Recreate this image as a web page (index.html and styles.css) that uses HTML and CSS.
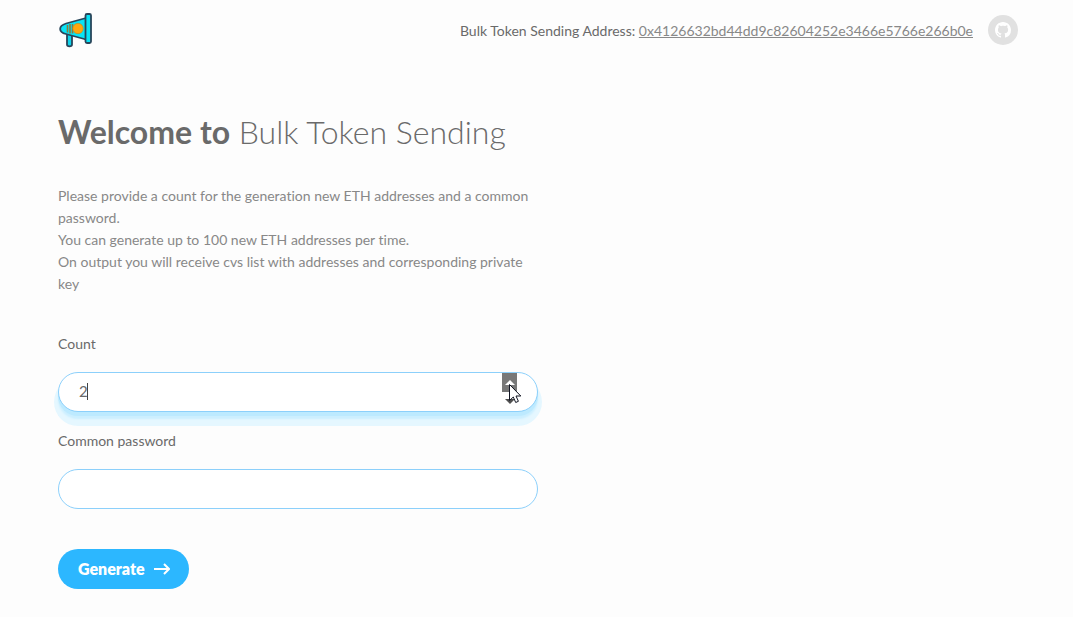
FILE: index.html
```html
<!DOCTYPE html>
<html lang="en">
<head>
<meta charset="utf-8">
<title>Bulk Token Sending</title>
<link rel="stylesheet" href="styles.css">
</head>
<body>
<div class="page">
  <header class="header">
    <a class="logo" href="#" aria-label="Home">
      <svg width="34" height="36" viewBox="0 0 34 36">
        <g stroke="#29455a" stroke-width="1.800" stroke-linejoin="round">
          <path d="M9 22h5v10.500a2.500 1.800 0 0 1-5 0z" fill="#10d4ea"/>
          <path d="M28 6 8 11.500C.2 14 .2 20 8 22L28 27.500z" fill="#08e4f6"/>
          <rect x="27.500" y="2" width="5.500" height="29" rx="1.500" fill="#08e4f6"/>
        </g>
        <path d="M9.500 13v7.500M12 12v9.500M14.500 12v9.500" stroke="#8a7a3c" stroke-width="1.600"/>
        <circle cx="20" cy="16.500" r="5.200" fill="#ffa70c" stroke="#b98528" stroke-width=".6"/>
      </svg>
    </a>
    <div class="contract">
      <p class="address">Bulk Token Sending Address: <a href="#">0x4126632bd44dd9c82604252e3466e5766e266b0e</a></p>
      <a class="github" href="#" aria-label="GitHub">
        <svg width="16" height="16" viewBox="0 0 16 16"><path fill="#fff" d="M8 0C3.580 0 0 3.580 0 8c0 3.540 2.290 6.530 5.470 7.590.4.070.55-.17.55-.38 0-.19-.01-.82-.01-1.490-2.010.37-2.530-.49-2.690-.94-.09-.23-.48-.94-.82-1.130-.28-.15-.68-.52-.01-.53.63-.01 1.080.58 1.230.82.72 1.210 1.870.87 2.330.66.07-.52.28-.87.51-1.070-1.780-.2-3.640-.89-3.640-3.950 0-.87.31-1.590.82-2.150-.08-.2-.36-1.020.08-2.120 0 0 .67-.21 2.200.82.64-.18 1.320-.27 2-.27s1.360.09 2 .27c1.530-1.040 2.200-.82 2.200-.82.44 1.100.16 1.920.08 2.120.51.56.82 1.270.82 2.150 0 3.070-1.870 3.750-3.650 3.950.29.25.54.73.54 1.480 0 1.070-.01 1.930-.01 2.200 0 .21.15.46.55.38A8.010 8.010 0 0 0 16 8c0-4.420-3.580-8-8-8z"/><path fill="#e1e1e1" d="M4.700 4.200 6.500 5h3l1.800-.8.8 2.800-1 2.500-2.200 1H7.100l-2.200-1-1-2.500z"/></svg>
      </a>
    </div>
  </header>
  <main class="content">
    <h1 class="title"><strong>Welcome to</strong> Bulk Token Sending</h1>
    <p class="description">Please provide a count for the generation new ETH addresses and a common password.<br>You can generate up to 100 new ETH addresses per time.<br>On output you will receive cvs list with addresses and corresponding private key</p>
    <form class="form">
      <label class="label" for="count">Count</label>
      <div class="field">
        <input class="input input-active" id="count" type="number" value="2">
        <span class="caret"></span>
        <svg class="spinner" width="20" height="38" viewBox="0 0 20 38" aria-hidden="true">
          <path d="M0 0h15v19H0z" fill="#787878"/>
          <path d="m3 12 5-5 5 5z" fill="#fff"/>
          <path d="m3 26 5 5 5-5z" fill="#505050"/>
          <path d="M7.500 11.500v16l3.800-3.500 2.400 5.500 2.700-1.200-2.400-5.300h4.800z" fill="#fff" stroke="#111522"/>
        </svg>
      </div>
      <label class="label" for="password">Common password</label>
      <div class="field">
        <input class="input" id="password" type="password">
      </div>
      <button class="button" type="button">Generate
        <svg width="16" height="12" viewBox="0 0 16 12" fill="none" stroke="#fff" stroke-width="2"><path d="M0 6h15M10 1l5 5-5 5"/></svg>
      </button>
    </form>
  </main>
</div>
</body>
</html>
```
FILE: styles.css
```css
* { box-sizing: border-box; }

body {
  margin: 0;
  background: #fdfdfd;
  color: #6a6a6a;
  font: 14px/22px Lato, sans-serif;
  font-variant-ligatures: none;
}

.page {
  max-width: 1073px;
  margin: 0 auto;
  padding: 0 55px 28px 58px;
}

.header {
  display: flex;
  align-items: center;
  justify-content: space-between;
  height: 60px;
}

.logo,
.logo svg { display: block; }

.contract {
  display: flex;
  align-items: center;
  gap: 15px;
}

.address {
  margin: 0;
  padding-top: 2px;
}

.address a { color: #888; }

.github {
  display: flex;
  align-items: center;
  justify-content: center;
  width: 30px;
  height: 30px;
  border-radius: 50%;
  background: #e1e1e1;
}

.content { max-width: 480px; }

.title {
  margin: 52px 0 33px;
  font-size: 32px;
  line-height: 40px;
  font-weight: 300;
}

.title strong { font-weight: 700; }

.description {
  margin: 0 0 38px;
  color: #888;
}

.label { display: block; }

.field {
  position: relative;
  margin: 17px 0 18px;
}

.input {
  display: block;
  width: 100%;
  height: 40px;
  padding: 0 20px 2px;
  border: 1px solid #8cd0fb;
  border-radius: 20px;
  outline: none;
  background: #fff;
  color: #6a6a6a;
  font: 15px Lato, sans-serif;
  appearance: textfield;
}

.input::-webkit-inner-spin-button { appearance: none; }

.input-active { box-shadow: 0 4px 0 #bdeaff, 0 7px 2px #ccefff, 0 10px 0 4px #e5f7ff; }

.caret {
  position: absolute;
  top: 11px;
  left: 29px;
  width: 1px;
  height: 17px;
  background: #444;
}

.spinner {
  position: absolute;
  top: 1px;
  right: 16px;
}

.button {
  display: flex;
  align-items: center;
  gap: 9px;
  height: 40px;
  margin-top: 40px;
  padding: 0 19px 1px 20px;
  border: 0;
  border-radius: 20px;
  background: #2cb7ff;
  color: #fff;
  font: 800 16px Lato, sans-serif;
}
```
